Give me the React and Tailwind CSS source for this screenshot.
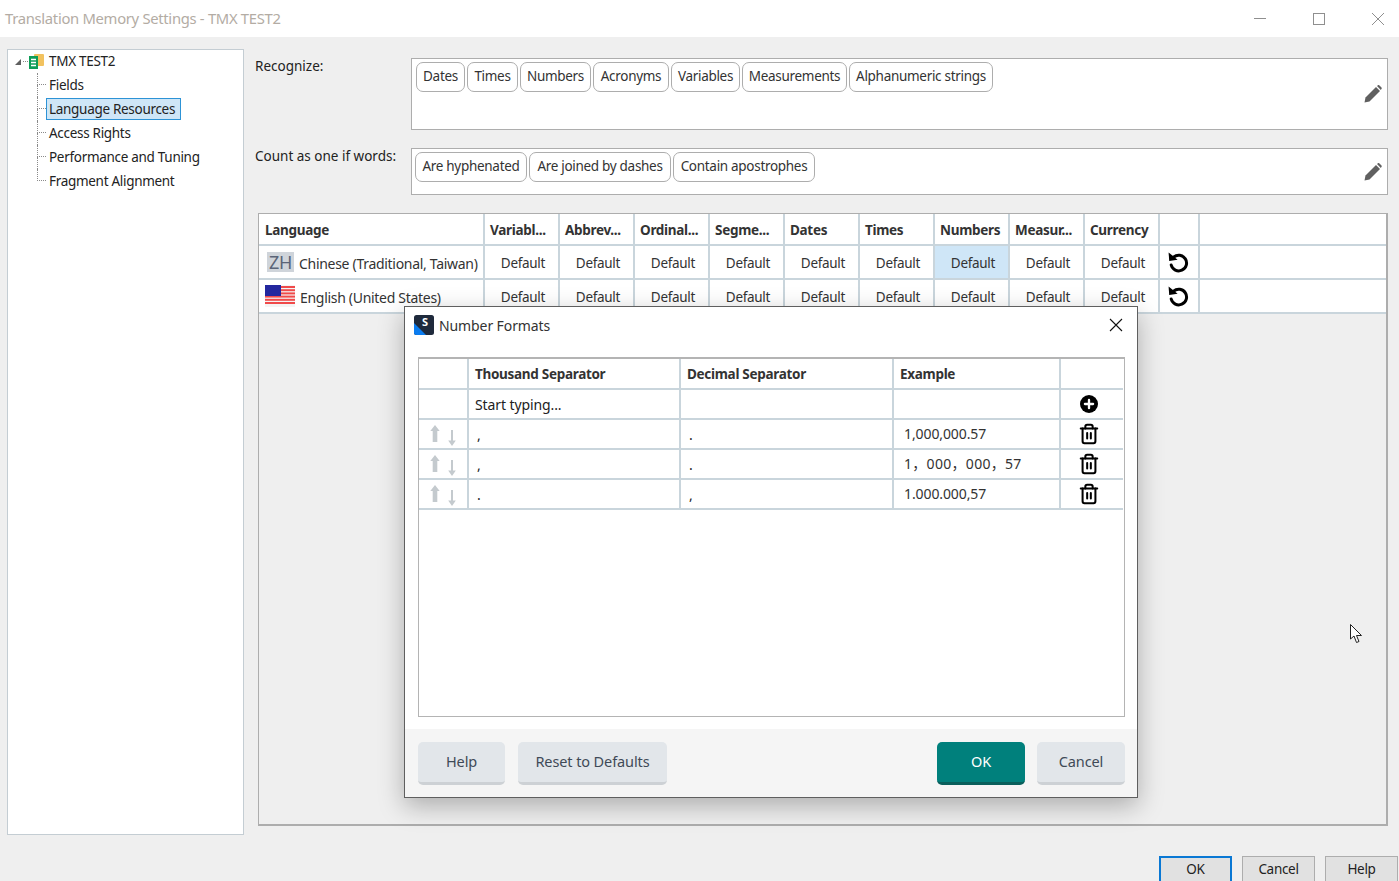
import React from "react";
import { Plus, Trash2 } from "lucide-react";

const font = "font-['Noto_Sans','Noto_Sans_CJK_SC',sans-serif]";
const t = "tracking-[-0.3px]";

function Pencil() {
  return (
    <svg width="18" height="18" viewBox="0 0 18 18" className="shrink-0">
      <path d="M0.5 17.5 L1.5 12.5 L12 2 L16 6 L5.5 16.5 Z" fill="#606060" />
      <path d="M13 1 L14.2 0 Q14.8 -.2 15.5 .5 L17.5 2.5 Q18 3.2 17.6 3.8 L16.8 5 Z" fill="#606060" />
    </svg>
  );
}

function Undo() {
  return (
    <svg width="22" height="22" viewBox="0 0 22 22" fill="none">
      <path d="M6.6 6.2 A7.8 7.8 0 1 1 4.2 14" stroke="#000" strokeWidth="3" strokeLinecap="round" />
      <path d="M1.6 1.4 L2.2 10 L10.6 8.8 Z" fill="#000" />
    </svg>
  );
}

function Arrows() {
  return (
    <div className="flex w-[49px] h-full pl-[11px] gap-[8px]">
      <svg width="10" height="18" viewBox="0 0 10 18" className="mt-[5px]">
        <path d="M5 0 L9.7 6 L7.3 6 L7.3 17 L2.7 17 L2.7 6 L.3 6 Z" fill="#c4cace" />
      </svg>
      <svg width="8" height="16" viewBox="0 0 8 16" className="mt-[10px]">
        <path d="M4 16 L7.8 10.5 L5 10.5 L5 0 L3 0 L3 10.5 L.2 10.5 Z" fill="#c4cace" />
      </svg>
    </div>
  );
}

function TreeRow({ label, last, selected }) {
  return (
    <div className="flex h-6 items-stretch">
      <div className="w-[9px] flex flex-col shrink-0">
        <div className="h-1/2 border-l border-b border-dotted border-[#8a8a8a]" />
        <div className={last ? "h-1/2" : "h-1/2 border-l border-dotted border-[#8a8a8a]"} />
      </div>
      {selected ? (
        <div className="w-[135px] h-[22px] mt-[1px] flex items-center pl-[2px] border border-[#2d93d6] bg-[#cfe6f7] text-[#222]">{label}</div>
      ) : (
        <div className="flex items-center pl-[3px] text-[#222]">{label}</div>
      )}
    </div>
  );
}

function Chip({ w, children }) {
  return (
    <div className={`${w} h-[30px] shrink-0 flex items-center justify-center pb-[2px] rounded-[7px] border border-[#adadad] bg-white text-[#333]`}>
      {children}
    </div>
  );
}

const headers = ["Variabl...", "Abbrev...", "Ordinal...", "Segme...", "Dates", "Times", "Numbers", "Measur...", "Currency"];

function LangRow({ icon, name, highlight, pl }) {
  return (
    <div className="flex h-[34px] border-b-2 border-[#c9d5dc]">
      <div className={`w-[226px] shrink-0 flex items-center border-r-2 border-[#c9d5dc] ${pl} text-[#333] overflow-hidden whitespace-nowrap`}>
        {icon}
        <span className="ml-[5px] mt-[3px] text-[14px]">{name}</span>
      </div>
      {headers.map((h, i) => (
        <div key={h} className={`w-[75px] shrink-0 flex items-center justify-center pl-[3px] pt-[3px] border-r-2 border-[#c9d5dc] text-[#333] ${i === highlight ? "bg-[#cfe6f7]" : ""}`}>
          Default
        </div>
      ))}
      <div className="w-[40px] shrink-0 flex items-center justify-center pr-[2px] border-r-2 border-[#c9d5dc]">
        <Undo />
      </div>
      <div className="flex-1" />
    </div>
  );
}

function ModalRow({ a, b, ex, wide }) {
  return (
    <div className="flex h-[30px] border-b-2 border-[#c9d5dc] text-[#333]">
      <div className="w-[50px] border-r-2 border-[#c9d5dc]"><Arrows /></div>
      <div className="w-[212px] border-r-2 border-[#c9d5dc] pl-[8px] pt-[5px] leading-5 text-[#222]">{a}</div>
      <div className="w-[213px] border-r-2 border-[#c9d5dc] pl-[8px] pt-[5px] leading-5 text-[#222]">{b}</div>
      <div className={`w-[167px] border-r-2 border-[#c9d5dc] pl-[10px] pb-[1px] flex items-center whitespace-nowrap ${wide ? "tracking-[0.3px]" : ""}`}>{ex}</div>
      <div className="flex-1 flex items-center justify-center pr-[7px]">
        <Trash2 size={22} strokeWidth={2.2} color="#000" />
      </div>
    </div>
  );
}

function ModalButton({ w, primary, children }) {
  return (
    <div className={`${w} h-[43px] rounded-[5px] flex items-center justify-center border-b-[3px] text-[14.5px] ${primary ? "bg-[#00807c] border-[#0a5f5c] text-white" : "bg-[#e2e6ea] border-[#cdd1d5] text-[#3f4a57]"}`}>
      {children}
    </div>
  );
}

function Flag() {
  return (
    <svg width="30" height="22" viewBox="0 0 30 22" className="shrink-0">
      <rect width="30" height="22" fill="#f4f4f4" />
      {[1, 4.2, 7.4, 10.6, 13.8, 17].map((y) => (
        <rect key={y} x="0" y={y} width="30" height="2" fill="#f04a4a" />
      ))}
      <rect x="0" y="0" width="16" height="11" fill="#23279e" />
    </svg>
  );
}

export default function App() {
  return (
    <div className={`${font} ${t} relative w-[1399px] h-[881px] overflow-hidden bg-[#efefef] text-[13.5px] text-[#222] flex flex-col`}>
      {/* title bar */}
      <div className="h-[37px] shrink-0 bg-white flex items-center pl-[5px]">
        <span className="text-[14.8px] text-[#b3aca4] flex-1 mb-[1px]">Translation Memory Settings - TMX TEST2</span>
        <div className="flex items-center w-[154px]">
          <div className="w-[12px] h-px bg-[#8f8f8f] ml-[9px]" />
          <div className="w-[12px] h-[12px] border border-[#8f8f8f] ml-[47px]" />
          <svg width="14" height="14" viewBox="0 0 14 14" className="ml-[46px]">
            <path d="M1 1 L13 13 M13 1 L1 13" stroke="#8f8f8f" strokeWidth="1" />
          </svg>
        </div>
      </div>

      <div className="flex-1 flex pt-[12px] pl-[7px] min-h-0">
        {/* tree */}
        <div className="w-[237px] h-[786px] shrink-0 bg-white border border-[#c4cdd3]">
          <div className="flex h-[23px] items-center">
            <svg width="8" height="8" viewBox="0 0 8 8" className="ml-[6px]">
              <path d="M7 1 L7 7 L1 7 Z" fill="#606060" />
            </svg>
            <div className="w-[5px] ml-[1px] border-t border-dotted border-[#8a8a8a]" />
            <svg width="15" height="16" viewBox="0 0 15 16" className="ml-[1px]">
              <rect x="5" y="0" width="10" height="12" rx="1" fill="#f2c25f" />
              <rect x="0" y="2" width="9" height="13" fill="#0e9d58" />
              <path d="M2 5.5 H7 M2 8.5 H7 M2 11.5 H7" stroke="#fff" strokeWidth="1.4" />
            </svg>
            <span className="ml-[5px]">TMX TEST2</span>
          </div>
          <div className="ml-[29px]">
            <TreeRow label="Fields" />
            <TreeRow label="Language Resources" selected />
            <TreeRow label="Access Rights" />
            <TreeRow label="Performance and Tuning" />
            <TreeRow label="Fragment Alignment" last />
          </div>
        </div>

        {/* right */}
        <div className="flex-1 pl-[11px] pr-[11px] flex flex-col">
          <div className="flex h-[72px] mt-[9px] shrink-0">
            <div className="w-[156px] shrink-0 text-[#222] leading-5 -mt-[2px] tracking-[0px]">Recognize:</div>
            <div className="flex-1 bg-white border border-[#adadad] flex items-center pr-[5px]">
              <div className="flex-1 h-full flex gap-[2px] pl-[4px] pt-[3px] items-start">
                <Chip w="w-[49px]">Dates</Chip>
                <Chip w="w-[51px]">Times</Chip>
                <Chip w="w-[71px]">Numbers</Chip>
                <Chip w="w-[76px]">Acronyms</Chip>
                <Chip w="w-[69px]">Variables</Chip>
                <Chip w="w-[105px]">Measurements</Chip>
                <Chip w="w-[144px]">Alphanumeric strings</Chip>
              </div>
              <Pencil />
            </div>
          </div>
          <div className="flex h-[47px] mt-[18px] shrink-0">
            <div className="w-[156px] shrink-0 text-[#222] leading-5 -mt-[2px] whitespace-nowrap tracking-[0px]">Count as one if words:</div>
            <div className="flex-1 bg-white border border-[#adadad] flex items-center pr-[5px]">
              <div className="flex-1 h-full flex gap-[2px] pl-[3px] pt-[3px] items-start">
                <Chip w="w-[112px]">Are hyphenated</Chip>
                <Chip w="w-[142px]">Are joined by dashes</Chip>
                <Chip w="w-[142px]">Contain apostrophes</Chip>
              </div>
              <Pencil />
            </div>
          </div>

          {/* table */}
          <div className="mt-[18px] ml-[3px] h-[613px] shrink-0 border border-[#adadad] border-b-2 border-r-2">
            <div className="bg-white">
              <div className="flex h-[32px] border-b-2 border-[#c9d5dc] font-bold text-[#333]">
                <div className="w-[226px] shrink-0 flex items-center pt-[3px] border-r-2 border-[#c9d5dc] pl-[6px]">Language</div>
                {headers.map((h) => (
                  <div key={h} className="w-[75px] shrink-0 flex items-center pt-[3px] border-r-2 border-[#c9d5dc] pl-[5px] overflow-hidden whitespace-nowrap">
                    {h}
                  </div>
                ))}
                <div className="w-[40px] shrink-0 border-r-2 border-[#c9d5dc]" />
                <div className="flex-1" />
              </div>
              <LangRow
                highlight={6}
                pl="pl-[8px]"
                name="Chinese (Traditional, Taiwan)"
                icon={
                  <div className="w-[27px] h-[20px] bg-[#cfd4da] text-[#5a6478] text-[18px] leading-5 flex items-center justify-center shrink-0">ZH</div>
                }
              />
              <LangRow pl="pl-[6px]" name="English (United States)" icon={<Flag />} />
            </div>
          </div>

          {/* bottom buttons */}
          <div className="flex justify-end gap-[10px] mt-[30px] -mr-[10px] shrink-0">
            <div className="w-[73px] h-[28px] pb-[2px] bg-[#e1e1e1] border-2 border-[#0a78d4] flex items-center justify-center">OK</div>
            <div className="w-[73px] h-[28px] pb-[2px] bg-[#e1e1e1] border border-[#adadad] flex items-center justify-center">Cancel</div>
            <div className="w-[73px] h-[28px] pb-[2px] bg-[#e1e1e1] border border-[#adadad] flex items-center justify-center">Help</div>
          </div>
        </div>
      </div>

      {/* modal */}
      <div className="absolute left-[404px] top-[306px] w-[734px] h-[492px] bg-white border border-[#5f5f5f] shadow-[0_8px_24px_rgba(0,0,0,0.28)] flex flex-col text-[14px] tracking-[-0.1px]">
        <div className="h-[50px] shrink-0 flex items-center pl-[9px] pr-[14px] pb-[14px]">
          <svg width="20" height="20" viewBox="0 0 20 20" className="shrink-0">
            <rect width="20" height="20" rx="2.5" fill="#1f2a3c" />
            <path d="M0 8 L12 20 L2.5 20 Q0 20 0 17.5 Z" fill="#0a7cf0" />
            <text x="11" y="11" fontSize="11" fontWeight="700" fill="#fff" fontFamily="Noto Sans" textAnchor="middle">S</text>
          </svg>
          <span className="ml-[5px] flex-1 text-[#333]">Number Formats</span>
          <svg width="14" height="14" viewBox="0 0 14 14">
            <path d="M1 1 L13 13 M13 1 L1 13" stroke="#111" strokeWidth="1.1" />
          </svg>
        </div>
        <div className="ml-[13px] mr-[12px] h-[360px] border border-t-2 border-[#b4b4b4] pr-[1px]">
          <div className="flex h-[31px] border-b-2 border-[#c9d5dc] font-bold text-[#333] text-[13.5px] tracking-[-0.3px]">
            <div className="w-[50px] border-r-2 border-[#c9d5dc]" />
            <div className="w-[212px] border-r-2 border-[#c9d5dc] pl-[6px] pt-[1px] flex items-center">Thousand Separator</div>
            <div className="w-[213px] border-r-2 border-[#c9d5dc] pl-[6px] pt-[1px] flex items-center">Decimal Separator</div>
            <div className="w-[167px] border-r-2 border-[#c9d5dc] pl-[6px] pt-[1px] flex items-center">Example</div>
            <div className="flex-1" />
          </div>
          <div className="flex h-[30px] border-b-2 border-[#c9d5dc] text-[#222]">
            <div className="w-[50px] border-r-2 border-[#c9d5dc]" />
            <div className="w-[212px] border-r-2 border-[#c9d5dc] pl-[6px] pt-[1px] flex items-center">Start typing...</div>
            <div className="w-[213px] border-r-2 border-[#c9d5dc]" />
            <div className="w-[167px] border-r-2 border-[#c9d5dc]" />
            <div className="flex-1 flex items-center justify-center pr-[7px]">
              <div className="w-[18px] h-[18px] mb-[1px] rounded-full bg-black flex items-center justify-center">
                <Plus size={14} strokeWidth={4} color="#fff" />
              </div>
            </div>
          </div>
          <ModalRow a="," b="." ex="1,000,000.57" />
          <ModalRow a="," b="." ex="1，000，000，57" wide />
          <ModalRow a="." b="," ex="1.000.000,57" />
        </div>
        <div className="flex-1 mt-[12px] bg-[#f5f5f5] flex items-start pt-[13px] pl-[13px] pr-[12px]">
          <ModalButton w="w-[87px]">Help</ModalButton>
          <div className="w-[13px]" />
          <ModalButton w="w-[149px]">Reset to Defaults</ModalButton>
          <div className="flex-1" />
          <ModalButton w="w-[88px]" primary>OK</ModalButton>
          <div className="w-[12px]" />
          <ModalButton w="w-[88px]">Cancel</ModalButton>
        </div>
      </div>

      {/* cursor */}
      <svg width="14" height="20" viewBox="0 0 14 20" className="absolute left-[1350px] top-[624px]">
        <path d="M0.5 0.5 L0.5 15 L4 12 L6.5 18.5 L9 17.5 L6.5 11.5 L11.5 11.5 Z" fill="#fff" stroke="#222" strokeWidth="1" />
      </svg>
    </div>
  );
}
